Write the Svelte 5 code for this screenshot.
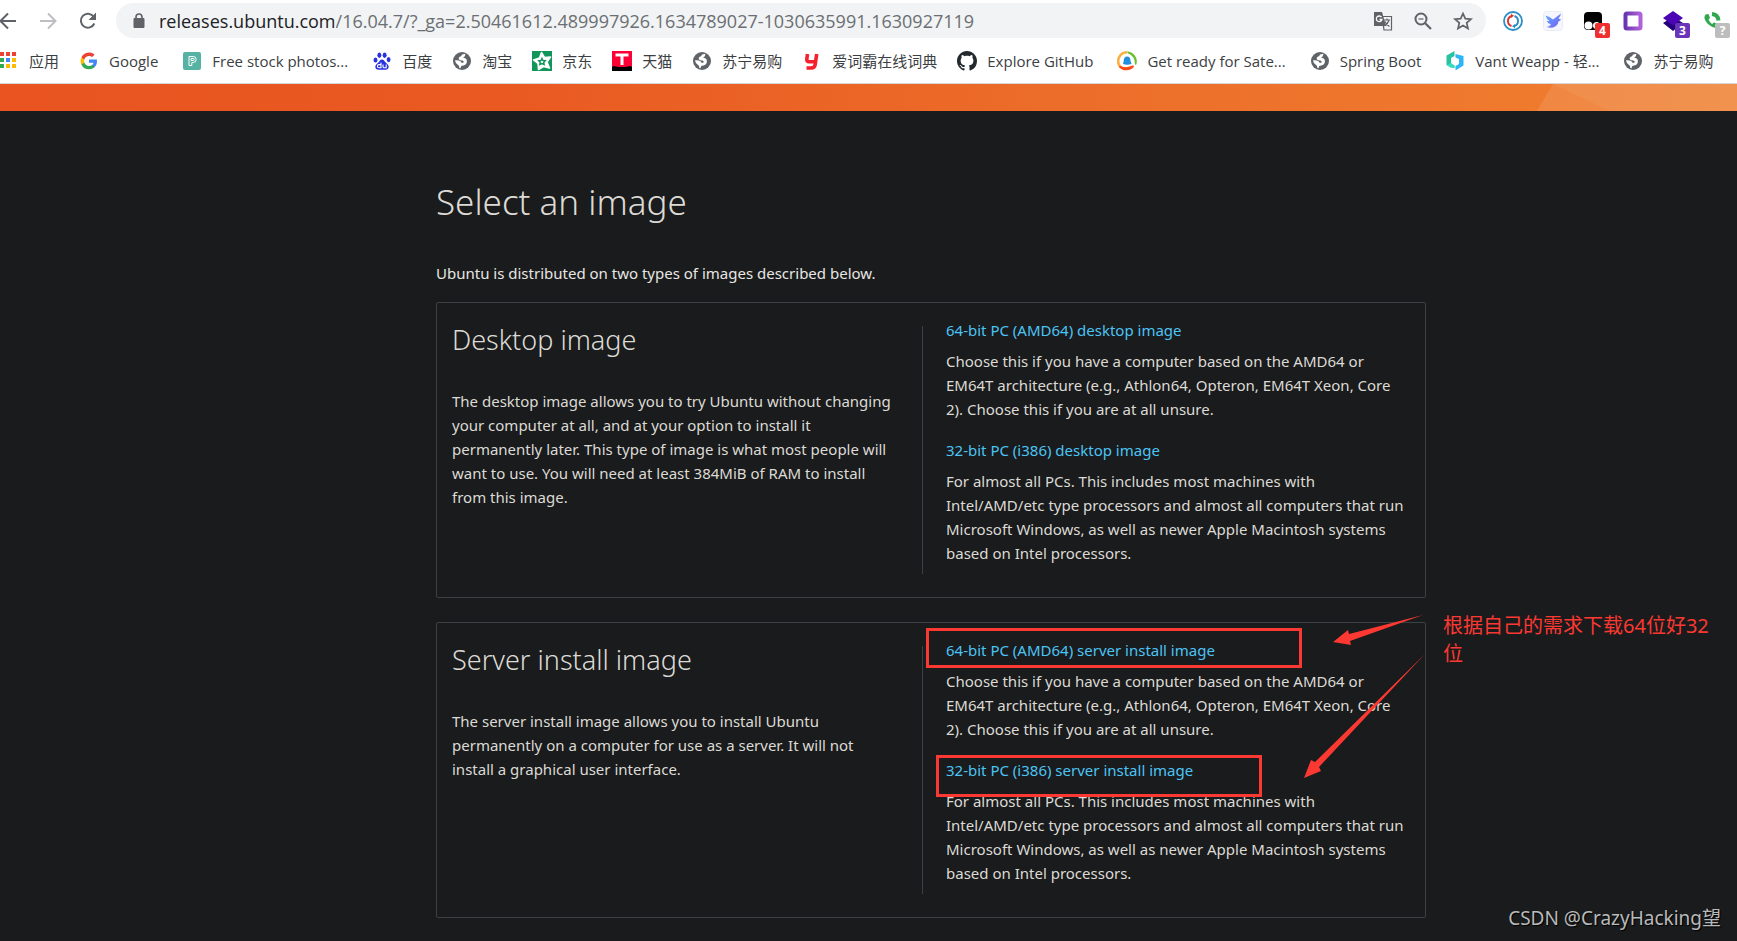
<script>
    const icons = {
        google: '<path fill="#4285f4" d="M18 10.2c0-.6-.1-1.100-.2-1.600H10v3.100h4.500a3.900 3.900 0 0 1-1.700 2.500v2.100h2.700c1.600-1.500 2.500-3.600 2.500-6.100z"/><path fill="#34a853" d="M10 18.300c2.300 0 4.100-.7 5.500-2l-2.700-2.100c-.7.5-1.700.8-2.800.8-2.200 0-4-1.500-4.700-3.500H2.500v2.200A8.300 8.300 0 0 0 10 18.300z"/><path fill="#fbbc05" d="M5.300 11.500a5 5 0 0 1 0-3.100V6.200H2.500a8.300 8.300 0 0 0 0 7.500z"/><path fill="#ea4335" d="M10 4.900c1.200 0 2.300.4 3.200 1.200l2.400-2.400A8.300 8.300 0 0 0 2.500 6.200l2.800 2.200C6 6.400 7.800 4.900 10 4.900z"/>',
        pexels: '<rect x="1" y="1" width="18" height="18" rx="2" fill="#56b3a4"/><path d="M7 14.500v-9h4.200a3 3 0 0 1 0 6H9.800v3zM9 9.500h2.200a1 1 0 0 0 0-2H9z" fill="none" stroke="#fff" stroke-width="1"/>',
        baidu: '<g fill="#2932e1"><ellipse cx="3.500" cy="9" rx="2" ry="2.600"/><ellipse cx="7.400" cy="4.300" rx="2" ry="2.700"/><ellipse cx="12.600" cy="4.300" rx="2" ry="2.700"/><ellipse cx="16.600" cy="8.600" rx="1.900" ry="2.600"/><path d="M10 8.500c1.500 0 2.300 1.300 3.400 2.700 1.300 1.500 3.300 2.500 3.300 4.600 0 2-1.500 3-3.200 3h-7c-1.800 0-3.200-1-3.200-3 0-2.100 2-3.100 3.300-4.600 1.100-1.400 1.900-2.700 3.400-2.700z"/></g><path d="M9 11.500v5.300H7a1.500 1.500 0 0 1 0-3.200h2M11 13.500v2.300q0 1 1 1h2.200v-3.300" fill="none" stroke="#fff" stroke-width="1.100"/>',
        globe: '<circle cx="10" cy="10" r="9" fill="#5f6368"/><path fill="#fff" d="M3 9.300q2-.3 3.700.2 2.300.6 2.800 2.200h2q.8-2-1.200-2.300l-2.200-.2q-2-.6-1.300-2.500.5-1.300 2.300-1.500L10 3.500l3.500-.7-.7 2.400-1.600 1.500q2.600 0 3.400 1.800.9 2.500-.5 4.500-1.100 1.300-2.800 1.500l-2 .5-.8 2.300-1.200-.2Q7.700 14.700 5.500 13.500 3.300 12 3 9.300z"/>',
        jd: '<path fill="#11965a" d="M0 0h20v20H0z"/><path fill="#fff" stroke="#fff" stroke-width="1.500" stroke-linejoin="round" d="M9.500 1.500l3 5 6-.5-3.500 5 2.500 6-6-1.500-5 3-.5-6-4.500-3.500 6-2z"/><path fill="none" stroke="#11965a" stroke-width="1.500" d="M10 7.500l1 2 2.200.2-1.500 1.700.4 2.100-2.100-1-2.100 1 .4-2.100-1.500-1.700 2.200-.2z"/>',
        tmall: '<path fill="#ff0036" d="M0 0h20v20H0z"/><path d="M0 20v-4q2-1.500 4-.5 6 1 12 0 2-1 4 .5v4z"/><path fill="#fff" d="M3.500 2.500h13v3h-5V14h-3V5.500h-5z"/>',
        iciba: '<path d="M5.500 3L4.800 8q-.3 2.700 2.300 2.700h5M14.700 3l-1.500 10.500q-.5 3.500-4 3.500H4.500" fill="none" stroke="#f5222d" stroke-width="3.600"/>',
        github: '<path transform="scale(1.250)" fill="#24292e" d="M8 0C3.580 0 0 3.580 0 8c0 3.540 2.290 6.530 5.470 7.590.4.070.55-.17.55-.38 0-.19-.01-.82-.01-1.490-2.010.37-2.530-.49-2.690-.94-.09-.23-.48-.94-.82-1.130-.28-.15-.68-.52-.01-.53.63-.01 1.080.58 1.230.82.72 1.210 1.870.87 2.330.66.070-.52.28-.87.510-1.070-1.780-.2-3.640-.89-3.640-3.950 0-.87.310-1.590.82-2.150-.08-.2-.36-1.020.08-2.120 0 0 .67-.21 2.200.82.64-.18 1.320-.27 2-.27s1.360.09 2 .27c1.530-1.040 2.200-.82 2.200-.82.44 1.100.16 1.920.08 2.120.51.56.82 1.270.82 2.150 0 3.070-1.870 3.750-3.650 3.950.29.25.54.73.54 1.480 0 1.070-.01 1.930-.01 2.200 0 .21.150.46.55.38A8.010 8.010 0 0 0 16 8c0-4.420-3.580-8-8-8z"/>',
        sate: '<path d="M3.500 16A8.800 8.800 0 0 1 10 1.300" fill="none" stroke="#fbb040" stroke-width="2.600"/><path d="M10.500 1.200q4 1.300 6.500 5 2 3.500 1.500 7.300a9.300 9.300 0 0 0-8-12.300z" fill="#6abf2a" stroke="#6abf2a" stroke-width="1.500"/><path d="M2.500 15.500q7 3 14-.5a9 9 0 0 1-14 .5z" fill="#fb4a14" stroke="#fb4a14" stroke-width="1.500"/><path d="M10 5.500q3.500 0 3.500 4.500l1 3q-4.500 1.500-8.500 0l.7-3Q6.800 5.500 10 5.500z" fill="#2090dc"/>',
        vant: '<path fill="#27c3a0" d="M9.500 0v5L6 7v6l3.500 1.500V17L1.500 14V4.500z"/><path fill="#35dcc0" d="M1.500 14L6 12l3.500 2.500V17l-4-.3z"/><path fill="#2db6f5" d="M10.500 3l8 2v9.500l-8 5V15l3.500-2V8l-3.500-1.500z"/>',
    };

    const bookmarks = [
        { icon: "google", name: "Google" },
        { icon: "pexels", name: "Free stock photos..." },
        { icon: "baidu", name: "百度" },
        { icon: "globe", name: "淘宝" },
        { icon: "jd", name: "京东" },
        { icon: "tmall", name: "天猫" },
        { icon: "globe", name: "苏宁易购" },
        { icon: "iciba", name: "爱词霸在线词典" },
        { icon: "github", name: "Explore GitHub" },
        { icon: "sate", name: "Get ready for Sate..." },
        { icon: "globe", name: "Spring Boot" },
        { icon: "vant", name: "Vant Weapp - 轻..." },
        { icon: "globe", name: "苏宁易购" },
    ];

    const appColors = ["#ea4335", "#ea4335", "#ea4335", "#34a853", "#4285f4", "#fbbc05", "#34a853", "#fbbc05", "#fbbc05"];

    const amd64 = "Choose this if you have a computer based on the AMD64 or EM64T architecture (e.g., Athlon64, Opteron, EM64T Xeon, Core 2). Choose this if you are at all unsure.";
    const i386 = "For almost all PCs. This includes most machines with Intel/AMD/etc type processors and almost all computers that run Microsoft Windows, as well as newer Apple Macintosh systems based on Intel processors.";

    const images = [
        {
            title: "Desktop image",
            kind: "desktop",
            text: "The desktop image allows you to try Ubuntu without changing your computer at all, and at your option to install it permanently later. This type of image is what most people will want to use. You will need at least 384MiB of RAM to install from this image.",
        },
        {
            title: "Server install image",
            kind: "server install",
            text: "The server install image allows you to install Ubuntu permanently on a computer for use as a server. It will not install a graphical user interface.",
        },
    ];

    let rest = $state("/16.04.7/?_ga=2.50461612.489997926.1634789027-1030635991.1630927119");
</script>

<header class="browser">
    <div class="toolbar">
        <button class="tool" aria-label="Back">
            <svg width="20" height="20" viewBox="0 0 20 20"><path d="M18 10H3M10 2.500L2.500 10l7.500 7.500" fill="none" stroke="#5f6368" stroke-width="2"/></svg>
        </button>
        <button class="tool" aria-label="Forward">
            <svg width="20" height="20" viewBox="0 0 20 20"><path d="M2 10h15M10 2.500l7.500 7.500-7.500 7.500" fill="none" stroke="#bcbec1" stroke-width="2"/></svg>
        </button>
        <button class="tool" aria-label="Reload">
            <svg width="20" height="20" viewBox="0 0 20 20"><path d="M16.300 12.500A7 7 0 1 1 15.500 5.500" fill="none" stroke="#5f6368" stroke-width="2"/><path d="M18 1.500V9h-7.500z" fill="#5f6368"/></svg>
        </button>
        <div class="omnibox">
            <svg class="lock" width="12" height="16" viewBox="0 0 12 16"><path d="M1 5.500h10v9H1z" fill="#5f6368" stroke="#5f6368" stroke-linejoin="round"/><path d="M3 6V4a3 3 0 0 1 6 0v2" fill="none" stroke="#5f6368" stroke-width="1.600"/></svg>
            <label for="url">releases.ubuntu.com</label>
            <input id="url" type="text" bind:value={rest}>
            <button class="tool" aria-label="Translate">
                <svg width="20" height="20" viewBox="0 0 20 20"><path d="M9 5.500h9.500V19H11z" fill="#f1f3f4" stroke="#5f6368" stroke-width="1.200"/><path d="M1 1h8l4 14H1z" fill="#5f6368"/><path d="M8.500 6.200a2.800 2.800 0 1 0 .4 2.300H6.500" fill="none" stroke="#fff" stroke-width="1.300"/><path d="M10.500 9h6.500M14 7.500V9M16 9q-1 4-4.500 6M12 10.500q1.500 3.500 4.500 5" fill="none" stroke="#5f6368" stroke-width="1.200"/></svg>
            </button>
            <button class="tool" aria-label="Zoom">
                <svg width="20" height="20" viewBox="0 0 20 20"><circle cx="8" cy="8" r="5.500" fill="none" stroke="#5f6368" stroke-width="2"/><path d="M12 12l6 6" stroke="#5f6368" stroke-width="2.200"/><path d="M5.500 8h5" stroke="#5f6368" stroke-width="1.200"/></svg>
            </button>
            <button class="tool" aria-label="Bookmark this page">
                <svg width="20" height="20" viewBox="0 0 20 20"><path d="M10 2.500l2.300 5.200 5.700.5-4.300 3.700 1.300 5.600-5-3-5 3 1.300-5.600L2 8.200l5.700-.5z" fill="none" stroke="#5f6368" stroke-width="1.700"/></svg>
            </button>
        </div>
        <div class="extensions">
            <button class="tool" aria-label="Sync">
                <svg width="20" height="20" viewBox="0 0 20 20"><circle cx="10" cy="10" r="9" fill="#fff" stroke="#2a8fc4" stroke-width="1.800"/><path d="M8.500 5a5.300 5.300 0 0 0 0 10" fill="none" stroke="#d9352c" stroke-width="1.900"/><path d="M11.500 5a5.300 5.300 0 0 1 0 10" fill="none" stroke="#2a8fc4" stroke-width="1.900"/><path d="M8 2.800l3 2-3 2.300z" fill="#d9352c"/><path d="M12 13l-3 2.300 3 2z" fill="#2a8fc4"/></svg>
            </button>
            <button class="tool" aria-label="Bird">
                <svg width="20" height="20" viewBox="0 0 20 20"><defs><linearGradient id="bird" x2="1" y2="1"><stop offset="0" stop-color="#5cb0ff"/><stop offset="1" stop-color="#7a5cf2"/></linearGradient></defs><rect x=".5" y=".5" width="19" height="19" rx="3" fill="#f6f7fd" stroke="#e9ebf8"/><path d="M2.500 4.500q4 .8 7.500 4L18 2.500q-.5 3-2.500 5l2.700 1.300-2.700 1.700q-.8 4.500-5.500 6-3.500.5-6.500-.5 3-.5 4.500-2.500-3.500-1-4.500-4 1.500.7 3 .5Q3.500 8 2.500 4.500z" fill="url(#bird)"/></svg>
            </button>
            <button class="tool" aria-label="Scripts">
                <svg width="20" height="20" viewBox="0 0 20 20"><rect x="1" y="1" width="18" height="18" rx="4"/><circle cx="5.500" cy="14.500" r="4" fill="#fff"/><circle cx="13.500" cy="14.500" r="3.500" fill="#fff"/></svg>
                <span class="badge red">4</span>
            </button>
            <button class="tool" aria-label="Frame">
                <svg width="20" height="20" viewBox="0 0 20 20"><defs><linearGradient id="frame"><stop offset="0" stop-color="#6a35b1"/><stop offset="1" stop-color="#b062d8"/></linearGradient></defs><rect x="2.500" y="2.500" width="15" height="15" rx="1.500" fill="#fff" stroke="url(#frame)" stroke-width="4"/></svg>
            </button>
            <button class="tool" aria-label="Layers">
                <svg width="20" height="20" viewBox="0 0 20 20"><path d="M0 12l10-6 10 6-10 8z" fill="#24007a"/><path d="M0 7l10-7 10 7-10 7.500z" fill="#4c05b5"/></svg>
                <span class="badge purple">3</span>
            </button>
            <button class="tool" aria-label="Calls">
                <svg width="20" height="20" viewBox="0 0 20 20"><path d="M2.500 3.500q-3 4 2.500 9.500 5 4.500 9 3.500l1-3.500-4-1.500-2 1.500Q6.500 11 5.500 8.500L7 7 5.500 3z" fill="#2fa84f"/><path d="M9 3q6 .5 6.500 6.500" fill="none" stroke="#2fa84f" stroke-width="4"/></svg>
                <span class="badge grey">?</span>
            </button>
        </div>
    </div>

    <nav class="bookmarks">
        <a href="#apps" class="apps">
            <svg width="20" height="20" viewBox="0 0 20 20">
                {#each appColors as color, i}
                    <rect x={1 + (i % 3) * 6} y={1 + Math.floor(i / 3) * 6} width="4" height="4" fill={color}/>
                {/each}
            </svg>
            应用
        </a>
        {#each bookmarks as bookmark}
            <a href="#bookmark" class:latin={/^[A-Z]/.test(bookmark.name)}>
                <svg width="20" height="20" viewBox="0 0 20 20">{@html icons[bookmark.icon]}</svg>
                {bookmark.name}
            </a>
        {/each}
    </nav>
</header>

<div class="banner">
    <svg width="200" height="27" viewBox="0 0 200 27"><path d="M16 0h184v27H0z" fill="#fff" fill-opacity=".1"/><path d="M16 0h184v27H73z" fill="#fff" fill-opacity=".05"/></svg>
</div>

<main>
    <h1>Select an image</h1>
    <p class="intro">Ubuntu is distributed on two types of images described below.</p>

    {#each images as image}
        <section class="card">
            <div class="about">
                <h2>{image.title}</h2>
                <p>{image.text}</p>
            </div>
            <div class="divider"></div>
            <dl>
                <dt><a href="#amd64">64-bit PC (AMD64) {image.kind} image</a></dt>
                <dd>{amd64}</dd>
                <dt><a href="#i386">32-bit PC (i386) {image.kind} image</a></dt>
                <dd>{i386}</dd>
            </dl>
        </section>
    {/each}

    <!-- Red marks drawn over the page -->
    <div class="mark mark64"></div>
    <div class="mark mark32"></div>
    <svg class="arrows" width="140" height="170" viewBox="0 0 140 170">
        <path d="M120 0L46 19l-1-4-15 12 18 3-1-4z" fill="#fc3832"/>
        <path d="M122 39L12 147l-4-2-7 18 17-7-2-4z" fill="#fc3832"/>
    </svg>
    <p class="note">根据自己的需求下载64位好32位</p>
    <p class="watermark">CSDN @CrazyHacking望</p>
</main>

<style>
    :global(body) {
        background: #191b1c;
    }

    .browser {
        height: 83px;
        background: #fff;
        border-bottom: 1px solid #d5d7da;
        font-family: "Open Sans", "Noto Sans CJK SC", sans-serif;
        overflow: hidden;
    }

    .toolbar {
        display: flex;
        align-items: center;
        height: 35px;
        padding-top: 3px;
    }

    .tool {
        position: relative;
        flex: none;
        width: 40px;
        height: 20px;
        padding: 0;
        border: 0;
        background: none;
        line-height: 0;
    }

    .toolbar > .tool {
        text-align: left;
    }

    .toolbar > .tool svg {
        margin-left: -2px;
    }

    .omnibox {
        flex: 1;
        display: flex;
        align-items: center;
        height: 35px;
        margin-left: -4px;
        padding-right: 3px;
        border-radius: 18px;
        background: #f1f3f4;
        font-size: 18px;
    }

    .lock {
        margin: 0 14px 0 17px;
    }

    .omnibox label {
        color: #202124;
    }

    .omnibox input {
        flex: 1;
        min-width: 0;
        padding: 0;
        border: 0;
        outline: 0;
        background: none;
        color: #6b6f73;
        font: inherit;
    }

    .extensions {
        display: flex;
        margin: 0 4px 0 7px;
    }

    .badge {
        position: absolute;
        left: 22px;
        top: 12px;
        width: 15px;
        height: 15px;
        border-radius: 2px;
        color: #fff;
        font: bold 12px/15px "Open Sans", sans-serif;
        text-align: center;
    }

    .red {
        background: #ef3030;
    }

    .purple {
        background: #6a35b8;
    }

    .grey {
        background: #bdbdbd;
    }

    .bookmarks {
        display: flex;
        align-items: center;
        gap: 20px;
        height: 45px;
        white-space: nowrap;
    }

    .bookmarks a {
        display: flex;
        align-items: center;
        gap: 10px;
        color: #3c4043;
        font-size: 15px;
        text-decoration: none;
    }

    .bookmarks .apps {
        margin-left: -1px;
    }

    .bookmarks .latin {
        padding-right: 4px;
    }

    .banner {
        display: flex;
        justify-content: flex-end;
        height: 27px;
        background: linear-gradient(90deg, #e95420, #e95a22 30%, #ec6c29 60%, #f08030);
    }

    main {
        position: relative;
        padding: 67px 311px 22px 436px;
        color: #dddad5;
        font: 15px/24px "Noto Sans", sans-serif;
    }

    h1, h2, p, dl, dd {
        margin: 0;
    }

    h1 {
        font-size: 35px;
        line-height: 48px;
        font-weight: 300;
    }

    .intro {
        margin: 35px 0 17px;
        color: #e8e6e3;
    }

    .card {
        display: grid;
        grid-template-columns: 470px 1px 1fr;
        padding: 15px 15px 23px;
        border: 1px solid #3c4144;
        border-radius: 2px;
    }

    .card + .card {
        margin-top: 24px;
    }

    h2 {
        margin: 6px 0 33px;
        font-size: 27px;
        line-height: 32px;
        font-weight: 300;
    }

    .about {
        padding-right: 24px;
    }

    .divider {
        margin-top: 8px;
        background: #3c4144;
    }

    dl {
        padding: 0 0 9px 23px;
    }

    dd {
        margin-top: 7px;
    }

    dd + dt {
        margin-top: 17px;
    }

    dt a {
        color: #4cc4f5;
        text-decoration: none;
    }

    .mark {
        position: absolute;
        box-sizing: border-box;
        border: 3px solid #fc3832;
    }

    .mark64 {
        left: 926px;
        top: 517px;
        width: 376px;
        height: 40px;
    }

    .mark32 {
        left: 936px;
        top: 644px;
        width: 326px;
        height: 42px;
    }

    .arrows {
        position: absolute;
        left: 1303px;
        top: 504px;
    }

    .note {
        position: absolute;
        left: 1443px;
        top: 501px;
        width: 276px;
        color: #fc3832;
        font: 20px/28px "Noto Sans", "Noto Sans CJK SC", sans-serif;
    }

    .watermark {
        position: absolute;
        right: 16px;
        top: 795px;
        color: #b9babb;
        font: 19px/24px "Noto Sans", "Noto Sans CJK SC", sans-serif;
        text-shadow: 1px 1px 1px #000;
    }
</style>
